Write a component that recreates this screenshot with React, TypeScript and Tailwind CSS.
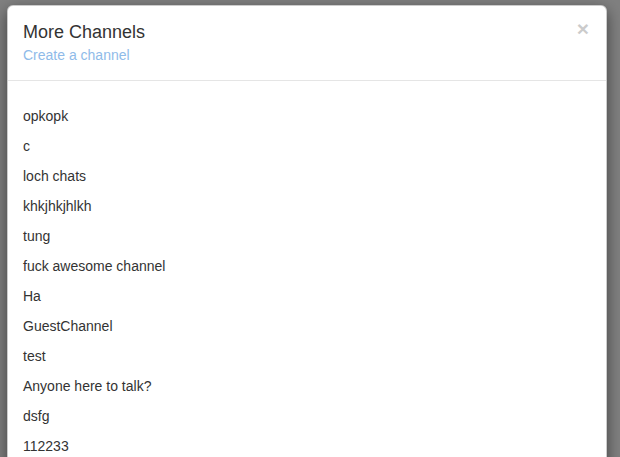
import React from 'react';

const channels = [
  'opkopk',
  'c',
  'loch chats',
  'khkjhkjhlkh',
  'tung',
  'fuck awesome channel',
  'Ha',
  'GuestChannel',
  'test',
  'Anyone here to talk?',
  'dsfg',
  '112233',
];

export default function App() {
  return (
    <div className="h-[457px] w-[620px] overflow-hidden bg-[#808080] pt-[5px] pl-[7px] font-['Liberation_Sans',Arial,sans-serif] text-[14px] text-[#333]">
      <div className="w-[600px] rounded-[6px] border border-black/20 bg-white shadow-[0_5px_15px_rgba(0,0,0,0.5)]">
        <div className="flex border-b border-[#e5e5e5] p-[15px]">
          <div className="flex-1">
            <h4 className="text-[18px] leading-[22px] text-[#333]">More Channels</h4>
            <a className="mt-[2px] block leading-[20px] text-[#8fbbe9]">Create a channel</a>
          </div>
          <button className="mt-[-3px] mr-[2px] h-[21px] self-start text-[21px] leading-none font-bold text-black opacity-20">
            ×
          </button>
        </div>
        <ul className="px-[15px] pt-[20px] pb-[15px]">
          {channels.map((c) => (
            <li key={c} className="py-[5px] leading-[20px]">
              {c}
            </li>
          ))}
        </ul>
      </div>
    </div>
  );
}
